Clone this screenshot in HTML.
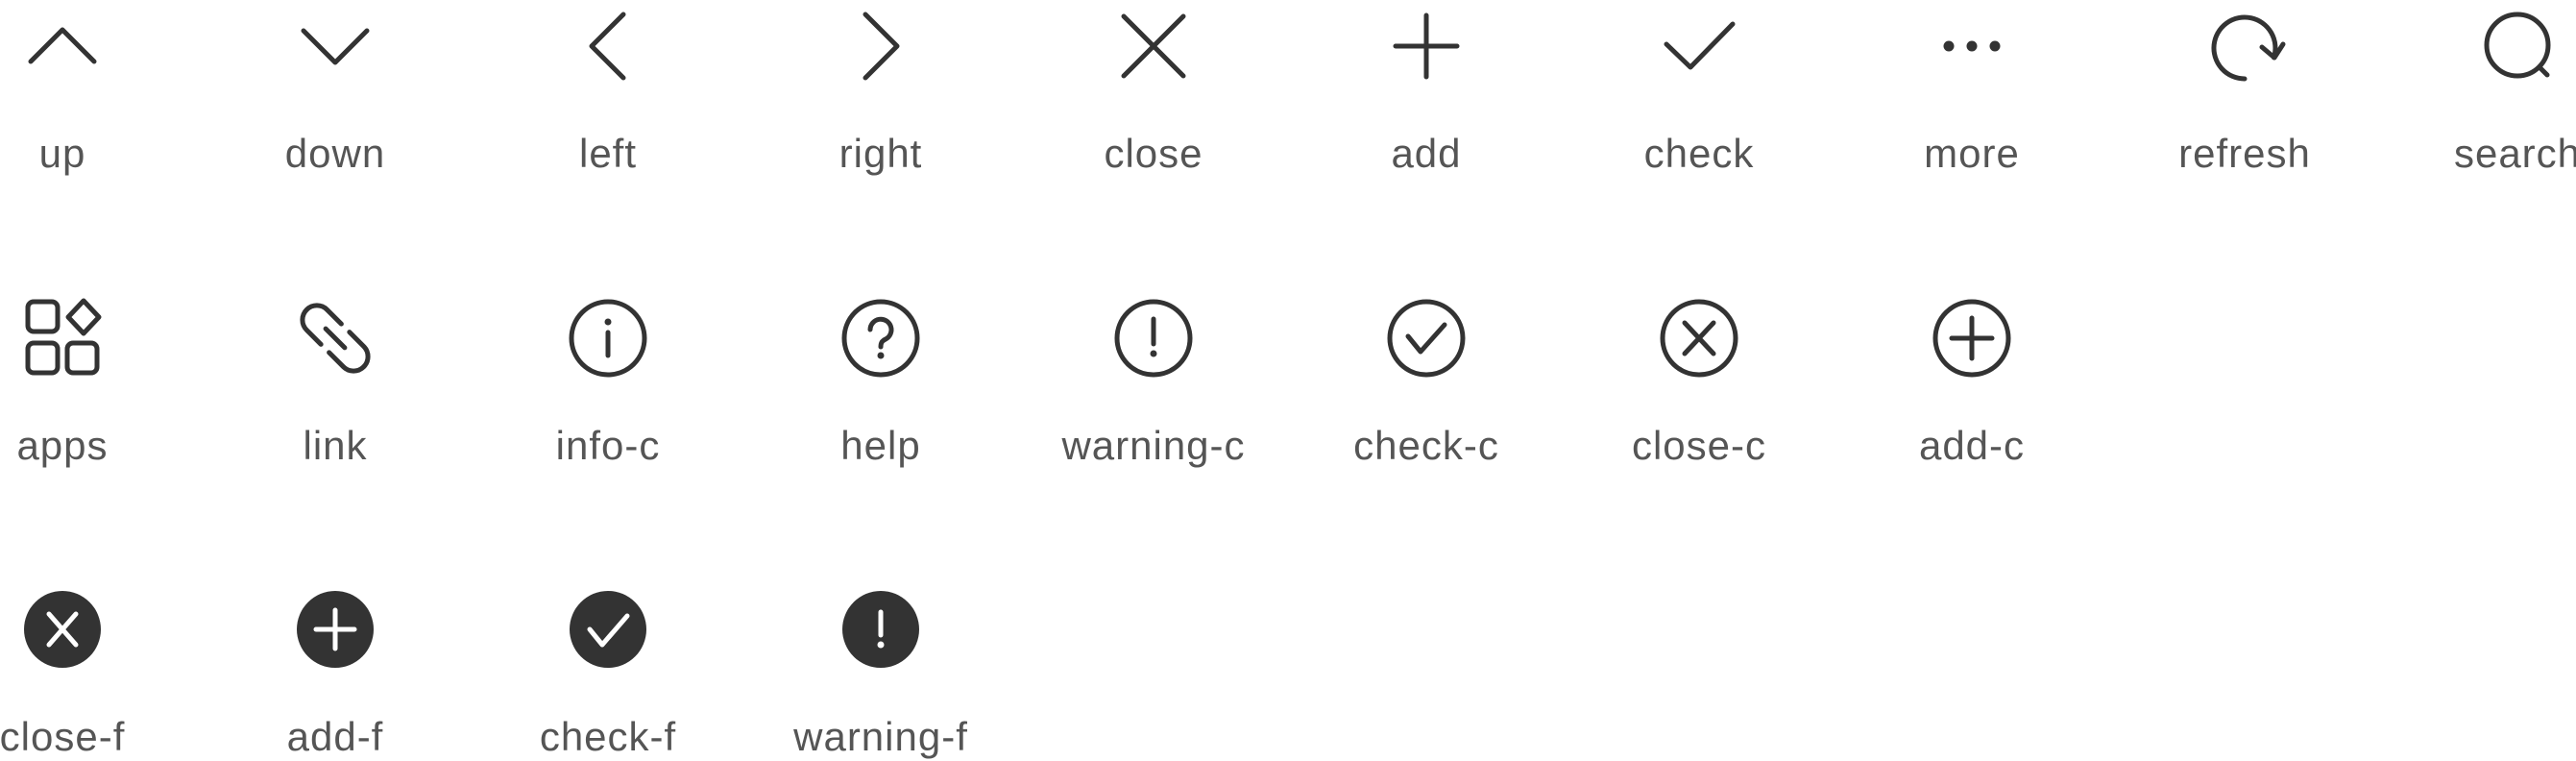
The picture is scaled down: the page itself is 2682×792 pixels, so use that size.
<!DOCTYPE html>
<html><head><meta charset="utf-8"><style>
html,body{margin:0;padding:0;background:#fff;width:2682px;height:792px;overflow:hidden}
svg{display:block}
text{font-family:"Liberation Sans",sans-serif;font-size:42px;letter-spacing:1px;fill:#555;text-anchor:middle}
.s{fill:none;stroke:#333;stroke-width:5;stroke-linecap:round;stroke-linejoin:round}
.w{fill:none;stroke:#fff;stroke-width:5;stroke-linecap:round;stroke-linejoin:round}
</style></head><body>
<svg width="2682" height="792" viewBox="0 0 2682 792">
<!-- row 1 -->
<g transform="translate(65,48)"><path class="s" d="M-33,16 L0,-17 L33,16"/></g>
<g transform="translate(349,48)"><path class="s" d="M-33,-16 L0,17 L33,-16"/></g>
<g transform="translate(633,48)"><path class="s" d="M16,-33 L-17,0 L16,33"/></g>
<g transform="translate(917,48)"><path class="s" d="M-16,-33 L17,0 L-16,33"/></g>
<g transform="translate(1201,48)"><path class="s" d="M-31,-31 L31,31 M31,-31 L-31,31"/></g>
<g transform="translate(1485,48)"><path class="s" d="M0,-32 V32 M-32,0 H32"/></g>
<g transform="translate(1769,48)"><path class="s" d="M-34,-2 L-9,22 L35,-23"/></g>
<g transform="translate(2053,48)" fill="#333"><circle cx="-24" cy="0" r="5.5"/><circle cx="0" cy="0" r="5.5"/><circle cx="24" cy="0" r="5.5"/></g>
<g transform="translate(2337,48)"><path class="s" d="M0,34 A32,32 0 1 1 30.4,11.9"/><path class="s" d="M18,1 L31,12 L40,-2"/></g>
<g transform="translate(2621,48)"><circle class="s" cx="0" cy="-1" r="32"/><path class="s" d="M23,22 L31,30"/></g>
<text x="65" y="174">up</text><text x="349" y="174">down</text><text x="633" y="174">left</text><text x="917" y="174">right</text><text x="1201" y="174">close</text><text x="1485" y="174">add</text><text x="1769" y="174">check</text><text x="2053" y="174">more</text><text x="2337" y="174">refresh</text><text x="2621" y="174">search</text>
<!-- row 2 -->
<g transform="translate(65,352)">
<rect class="s" x="-36" y="-38" width="31" height="31" rx="6"/>
<rect class="s" x="-36" y="5" width="31" height="31" rx="6"/>
<rect class="s" x="5" y="5" width="31" height="31" rx="6"/>
<path class="s" d="M22,-39 L38,-22 L22,-5 L6,-22 Z"/>
</g>
<g transform="translate(349,352) rotate(45)">
<path class="s" d="M-6,-15 H-27 A15,15 0 0 0 -27,15 H-6"/>
<path class="s" d="M6,-15 H27 A15,15 0 0 1 27,15 H6"/>
<path class="s" d="M-14,0 H14"/>
</g>
<g transform="translate(633,352)"><circle class="s" r="38"/><path class="s" d="M0,-6 V18"/><circle cx="0" cy="-17" r="3.5" fill="#333"/></g>
<g transform="translate(917,352)"><circle class="s" r="38"/><path class="s" d="M-11,-9 A11,11 0 1 1 5,1 C1,3 0,5 0,9"/><circle cx="0" cy="18" r="3.5" fill="#333"/></g>
<g transform="translate(1201,352)"><circle class="s" r="38"/><path class="s" d="M0,-20 V6"/><circle cx="0" cy="16" r="3.5" fill="#333"/></g>
<g transform="translate(1485,352)"><circle class="s" r="38"/><path class="s" d="M-19,-2 L-6,14 L19,-14"/></g>
<g transform="translate(1769,352)"><circle class="s" r="38"/><path class="s" d="M-15,-16 L15,16 M15,-16 L-15,16"/></g>
<g transform="translate(2053,352)"><circle class="s" r="38"/><path class="s" d="M0,-21 V21 M-21,0 H21"/></g>
<text x="65" y="478">apps</text><text x="349" y="478">link</text><text x="633" y="478">info-c</text><text x="917" y="478">help</text><text x="1201" y="478">warning-c</text><text x="1485" y="478">check-c</text><text x="1769" y="478">close-c</text><text x="2053" y="478">add-c</text>
<!-- row 3 -->
<g transform="translate(65,655)"><circle r="40" fill="#333"/><path class="w" d="M-14,-16 L14,16 M14,-16 L-14,16"/></g>
<g transform="translate(349,655)"><circle r="40" fill="#333"/><path class="w" d="M0,-20 V20 M-20,0 H20"/></g>
<g transform="translate(633,655)"><circle r="40" fill="#333"/><path class="w" d="M-19,0 L-6,16 L20,-14"/></g>
<g transform="translate(917,655)"><circle r="40" fill="#333"/><path class="w" d="M0,-18 V6"/><circle cx="0" cy="16" r="3.5" fill="#fff"/></g>
<text x="65" y="781">close-f</text><text x="349" y="781">add-f</text><text x="633" y="781">check-f</text><text x="917" y="781">warning-f</text>
</svg>
</body></html>
